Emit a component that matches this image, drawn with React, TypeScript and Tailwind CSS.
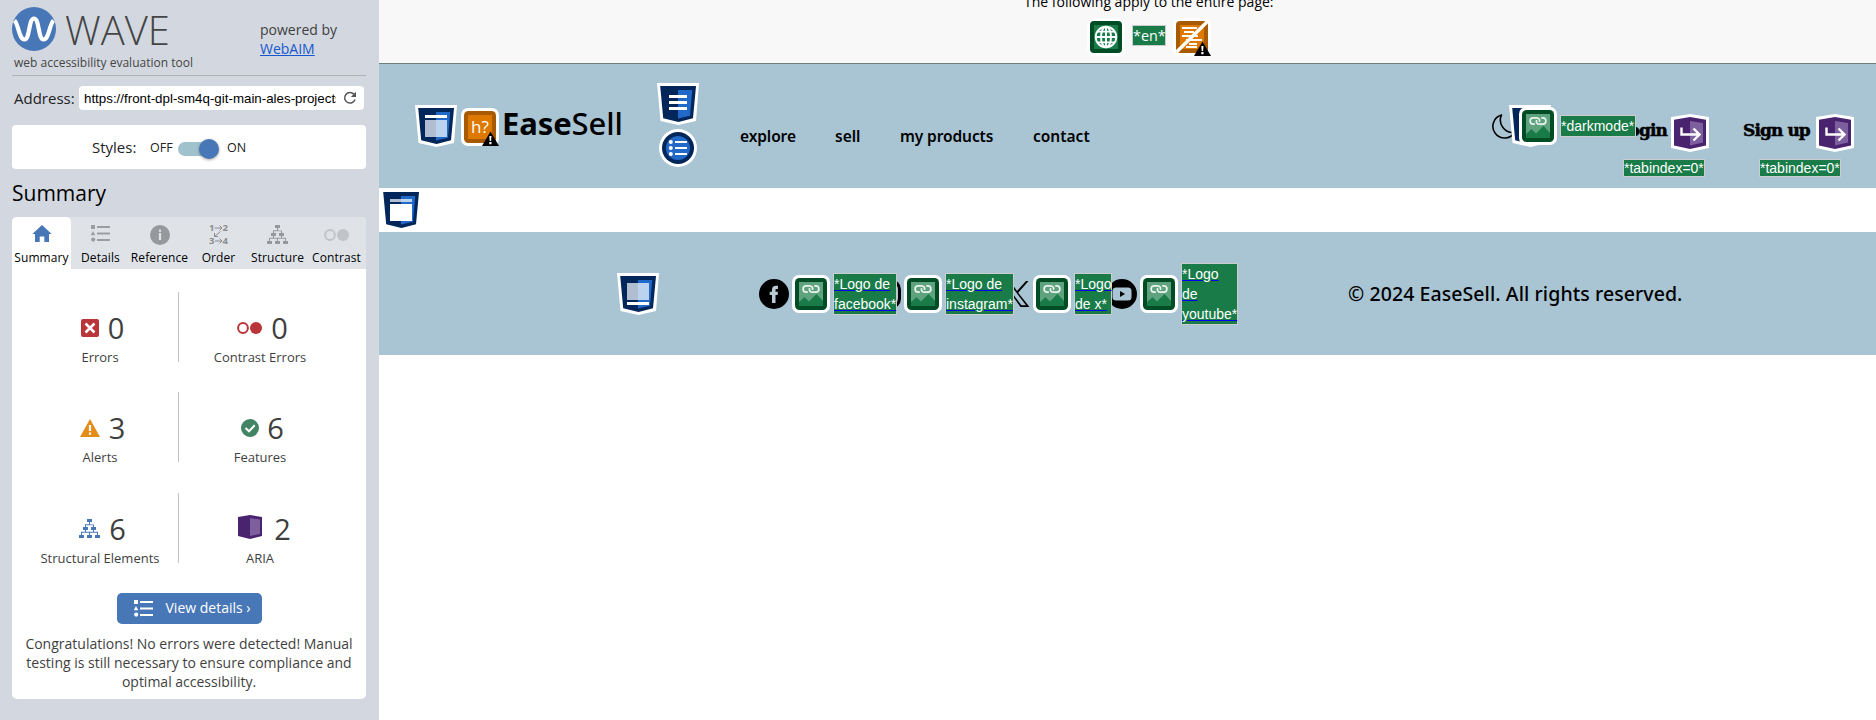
import React from "react";

const OS = "font-['Open_Sans','Noto_Sans',sans-serif]";
const NS = "font-['Noto_Sans','Open_Sans',sans-serif]";
const LS = "font-['Liberation_Sans',Arial,sans-serif]";
const SLAB =
  "font-['DejaVu_Serif',serif] text-[17px] font-bold leading-[28px] tracking-[-0.900px] [-webkit-text-stroke:0.5px_#000]";

type P = { className?: string };

function Warning({ x = 21, y = 23 }: { x?: number; y?: number }) {
  return (
    <g transform={`translate(${x} ${y})`}>
      <path d="M8.5 0.5 17 15H0Z" fill="#000" />
      <path d="M7.3 5h2.2l-.4 5H7.7ZM7.3 11h2.2v2.2H7.3Z" fill="#fff" />
    </g>
  );
}

function Shield({ kind, className = "" }: P & { kind: "header" | "main" | "footer" | "nav" }) {
  return (
    <svg className={`shrink-0 ${className}`} width="42" height="42" viewBox="0 0 42 42">
      <path d="M0 0H42L39 38 21.5 42 3.5 38Z" fill="#fff" />
      <path d="M3.2 3H39L36 35.3 21.5 39 6.2 35.3Z" fill="#00265a" />
      <path d="M21 7H35.2L33 32.7 21 35.5Z" fill="#2169c9" />
      {kind === "header" && (
        <>
          <path d="M10 10H32v3H10Z" fill="#fff" />
          <path d="M10 15H21V32H10Z" fill="#b1bdd0" />
          <path d="M21 15H32V32H21Z" fill="#bcd3f0" />
        </>
      )}
      {kind === "main" && (
        <>
          <path d="M10 10H21v3H10Z" fill="#b1bdd0" />
          <path d="M21 10H32v3H21Z" fill="#bcd3f0" />
          <path d="M10 15H32V32H10Z" fill="#fff" />
        </>
      )}
      {kind === "footer" && (
        <>
          <path d="M10 10H21V27H10Z" fill="#b1bdd0" />
          <path d="M21 10H32V27H21Z" fill="#bcd3f0" />
          <path d="M10 29H32v3H10Z" fill="#fff" />
        </>
      )}
      {kind === "nav" && <path d="M12 12H30v3H12ZM12 18H30v3H12ZM12 24H30v3H12Z" fill="#fff" />}
    </svg>
  );
}

function ListBadge({ className = "" }: P) {
  return (
    <svg className={`shrink-0 ${className}`} width="38" height="38" viewBox="0 0 38 38">
      <circle cx="19" cy="19" r="19" fill="#fff" />
      <circle cx="19" cy="19" r="16" fill="#00265a" />
      <circle cx="19" cy="19" r="12" fill="#2169c9" />
      <circle cx="11.8" cy="13" r="2" fill="#fff" />
      <circle cx="11.8" cy="19" r="2" fill="#fff" />
      <circle cx="11.8" cy="25" r="2" fill="#fff" />
      <path d="M16 12H28v2H16ZM16 18H28v2H16ZM16 24H28v2H16Z" fill="#fff" />
    </svg>
  );
}

function LinkedImage({ className = "" }: P) {
  return (
    <svg className={`shrink-0 ${className}`} width="38" height="38" viewBox="0 0 38 38">
      <rect width="38" height="38" rx="7" fill="#fff" />
      <rect x="3" y="3" width="32" height="32" rx="4.5" fill="#004d25" />
      <rect x="7" y="7" width="24" height="24" fill="#5ea27e" />
      <path d="M7 27 12.5 22.3 17 26.5 24.5 19 31 26V31H7Z" fill="#187b48" />
      <path
        d="M15.800 17.200H14.300A3.200 3.200 0 0 1 14.300 10.800H17.300C20 10.800 21.300 12.700 20.300 15M22.200 10.800H23.700A3.200 3.200 0 0 1 23.700 17.200H20.700C18 17.200 16.700 15.300 17.700 13"
        fill="none"
        stroke="#e9f3ed"
        strokeWidth="1.700"
      />
    </svg>
  );
}

function AriaTab({ className = "" }: P) {
  return (
    <svg className={`shrink-0 ${className}`} width="38" height="38" viewBox="0 0 38 38">
      <path d="M0 3 19 0 38 3V34L19 38 0 34Z" fill="#fff" />
      <path d="M3 5.7 19 3 35 5.7V31.4L19 35 3 31.4Z" fill="#4a236f" />
      <path d="M19 7 32 9V28.5L19 31.5Z" fill="#7e5f9e" />
      <path d="M10.5 13.5V20.5H28M22.5 14.5 28.5 20.5 22.5 26.5" fill="none" stroke="#fff" strokeWidth="2.4" />
    </svg>
  );
}

function OrangeH({ className = "" }: P) {
  return (
    <div className={`relative h-[38px] w-[38px] shrink-0 ${className}`}>
      <svg width="38" height="38" viewBox="0 0 38 38">
        <rect width="38" height="38" rx="7" fill="#fff" />
        <rect x="3" y="3" width="32" height="32" rx="4.5" fill="#a85a00" />
        <rect x="7" y="7" width="24" height="24" fill="#dd7900" />
      </svg>
      <span className={`absolute left-[10px] top-[9px] text-[17px] leading-[20px] text-white ${OS}`}>h?</span>
      <svg className="absolute left-0 top-0" width="38" height="38" viewBox="0 0 38 38">
        <Warning />
      </svg>
    </div>
  );
}

function Globe({ className = "" }: P) {
  return (
    <svg className={`shrink-0 ${className}`} width="38" height="38" viewBox="0 0 38 38">
      <rect width="38" height="38" rx="7" fill="#fff" />
      <rect x="3" y="3" width="32" height="32" rx="4" fill="#004d25" />
      <rect x="7" y="7" width="24" height="24" fill="#187b48" />
      <g fill="none" stroke="#fff" strokeWidth="1.9">
        <circle cx="19" cy="19" r="10.3" />
        <ellipse cx="19" cy="19" rx="5" ry="10.3" />
        <path d="M19 8.5V29.5M8.5 19H29.5M10.5 13.6H27.5M10.5 24.4H27.5" />
      </g>
    </svg>
  );
}

function NoHeadings({ className = "" }: P) {
  return (
    <svg className={`shrink-0 ${className}`} width="38" height="38" viewBox="0 0 38 38">
      <rect width="38" height="38" rx="7" fill="#fff" />
      <rect x="3" y="3" width="32" height="32" rx="4" fill="#a85a00" />
      <rect x="7" y="7" width="24" height="24" fill="#dd7900" />
      <path d="M9 9H24v2H9ZM11 13H21v2H11ZM9 17H25v2H9ZM13 21H29v2H13ZM16 25H24v2H16ZM13 28H24v2H13Z" fill="#fff" />
      <path d="M3.8 33.8 34.2 3.8" stroke="#fff" strokeWidth="3.4" />
      <Warning x={21} y={23} />
    </svg>
  );
}

function Label({ className = "", children }: P & { children: React.ReactNode }) {
  return (
    <span className={`block shrink-0 whitespace-nowrap border border-[#ccc] bg-[#187b48] text-[14px] text-white ${LS} ${className}`}>
      {children}
    </span>
  );
}

function Structure({ color, className = "" }: P & { color: string }) {
  return (
    <svg className={className} width="22" height="20" viewBox="0 0 22 20">
      <path
        fill={color}
        d="M8 0h5v3H8ZM4 8h5v3H4ZM12 8h5v3H12ZM0 16h5v3H0ZM8 16h5v3H8ZM16 16h5v3H16ZM10 3h1v2.500h4V8h-1V6.300H7V8H6V5.300h4ZM6 11h1v1.800h7V11h1v1.800h4V16h-1v-2.200h-7V16h-1v-2.200H3V16H2v-3.200h4Z"
      />
    </svg>
  );
}

function DetailsIcon({ color, className = "" }: P & { color: string }) {
  return (
    <svg className={className} width="20" height="17" viewBox="0 0 20 17" fill={color}>
      <path d="M0 0h4v4H0ZM6 1h13v2H6ZM2 6l2.300 4.300H-.3ZM6 7.500h13v2H6ZM6 14h13v2H6Z" />
      <circle cx="2.200" cy="14.600" r="2.100" />
    </svg>
  );
}

function TwoCircles({ color, size }: { color: string; size: number }) {
  return (
    <svg width={size * 2 + 1} height={size} viewBox="0 0 25 12">
      <circle cx="6" cy="6" r="4.900" fill="none" stroke={color} strokeWidth="2" />
      <circle cx="19" cy="6" r="6" fill={color} />
    </svg>
  );
}

function OrderIcon() {
  return (
    <div className={`relative h-[22px] w-[19px] text-[9.500px] font-bold leading-[10px] text-[#8a8d90] ${OS}`}>
      <span className="absolute left-0 top-[-1px]">1</span>
      <span className="absolute right-0 top-[-1px]">2</span>
      <span className="absolute left-0 top-[12px]">3</span>
      <span className="absolute right-0 top-[12px]">4</span>
      <svg className="absolute left-0 top-0" width="20" height="22" viewBox="0 0 20 22" fill="none" stroke="#8a8d90" strokeWidth="1">
        <path d="M5.500 4H13M10.500 1.500 13 4 10.500 6.500M6 17H13M10.500 14.500 13 17 10.500 19.500M11.500 7.500 5.500 12.500M5.500 9V12.500H9" />
      </svg>
    </div>
  );
}

function Tab({ label, icon, active = false }: { label: string; icon: React.ReactNode; active?: boolean }) {
  return (
    <div
      className={`flex h-[52px] w-[59px] flex-col items-center ${active ? "rounded-t-[5px] bg-white" : ""}`}
    >
      <div className="flex h-[35px] w-full items-center justify-center">{icon}</div>
      <span className={`whitespace-nowrap text-[12px] leading-[12px] tracking-[0.1px] text-black ${OS}`}>{label}</span>
    </div>
  );
}

function Stat({ icon, value, label, divider = false }: { icon: React.ReactNode; value: string; label: string; divider?: boolean }) {
  return (
    <div className={`flex h-[70px] flex-col items-center ${divider ? "w-[157px] border-r border-[#bfc1c3]" : "w-[162px]"}`}>
      <div className={`mt-[19px] flex h-[34px] items-center ${divider ? "pl-[5px]" : "pl-[5px]"}`}>
        {icon}
        <span className={`text-[29px] leading-[34px] text-[#3f3f3f] ${OS}`}>{value}</span>
      </div>
      <span className={`mt-[3px] whitespace-nowrap text-[13px] leading-[18px] text-[#3f3f3f] ${OS}`}>{label}</span>
    </div>
  );
}

function Sidebar() {
  return (
    <aside className={`h-[720px] w-[379px] shrink-0 bg-[#d3d8e0] pl-[12px] pr-[13px] ${OS}`}>
      <div className="flex h-[52px] items-start pt-[7px]">
        <svg width="44" height="44" viewBox="0 0 44 44">
          <circle cx="22" cy="22" r="22" fill="#4877b7" />
          <path
            d="M2.500 13.500C6.500 17 7 32.500 12.500 32.500 18 32.500 16.500 11.500 22 11.500 27.500 11.500 26 32.500 31.500 32.500 37 32.500 37.500 17 41.500 13.500"
            fill="none"
            stroke="#fff"
            strokeWidth="4.200"
          />
        </svg>
        <span className="ml-[9px] mt-[1px] block w-[195px] text-[40px] font-light leading-[44px] text-[#454545]">WAVE</span>
        <div className="mt-[13px] whitespace-nowrap text-[14px] leading-[19px] text-[#3f3f3f]">
          powered by
          <br />
          <span className="text-[#1657cf] underline">WebAIM</span>
        </div>
      </div>
      <div className="h-[24px] border-b border-[#aeb2b7] pl-[2px] pt-[2px] text-[12px] leading-[18px] text-[#454545]">
        web accessibility evaluation tool
      </div>
      <div className="mt-[10px] flex h-[24px] items-center pl-[2px]">
        <span className="-mt-[1px] w-[65px] text-[15px] leading-[24px] text-[#222]">Address:</span>
        <div className="flex h-[24px] w-[285px] items-center rounded-[4px] bg-white pl-[5px]">
          <span className={`block w-[252px] overflow-hidden whitespace-nowrap pt-[1px] text-[13.330px] text-black ${LS}`}>
            https://front-dpl-sm4q-git-main-ales-projects
          </span>
          <svg className="ml-[7px]" width="14" height="14" viewBox="0 0 14 14">
            <path d="M11 3.300A5.300 5.300 0 1 0 12 8.500" fill="none" stroke="#555" strokeWidth="1.500" />
            <path d="M13 .8V6H7.800Z" fill="#555" />
          </svg>
        </div>
      </div>
      <div className="mt-[15px] flex h-[44px] items-center rounded-[4px] bg-white pl-[80px] text-[#222]">
        <span className="w-[58px] text-[15px]">Styles:</span>
        <span className="mt-[2px] w-[28px] text-[12.500px]">OFF</span>
        <div className="mt-[4px] flex h-[14px] w-[38px] items-center rounded-full bg-[#9fc2cd]">
          <div className="ml-[21px] h-[20px] w-[20px] shrink-0 rounded-full bg-[#4877b7] shadow-[0_1px_3px_rgba(0,0,0,0.35)]" />
        </div>
        <span className="ml-[11px] mt-[2px] text-[12.500px]">ON</span>
      </div>
      <h2 className="mt-[10px] h-[38px] text-[21px] leading-[28px] text-black">Summary</h2>
      <div className="h-[482px] rounded-[5px] bg-white">
        <div className="flex h-[52px] rounded-t-[5px] bg-[#dfe3e8]">
          <Tab
            active
            label="Summary"
            icon={
              <svg className="-mt-[2px]" width="20" height="17" viewBox="0 0 20 17">
                <path d="M10 0 19.700 9H17V17H12.300V11.500H7.700V17H3V9H.3Z" fill="#4877b7" />
              </svg>
            }
          />
          <Tab label="Details" icon={<DetailsIcon color="#9b9ea1" className="-mt-[2px]" />} />
          <Tab
            label="Reference"
            icon={
              <svg width="20" height="20" viewBox="0 0 20 20">
                <circle cx="10" cy="10" r="10" fill="#96999c" />
                <path d="M8.900 4.500h2.200v2.200H8.900ZM8.900 8h2.200v7H8.900Z" fill="#dfe3e8" />
              </svg>
            }
          />
          <Tab label="Order" icon={<OrderIcon />} />
          <Tab label="Structure" icon={<Structure color="#96999c" />} />
          <Tab label="Contrast" icon={<TwoCircles color="#c0c3c7" size={12} />} />
        </div>
        <div className="flex flex-wrap gap-y-[30.400px] pl-[10px] pt-[23px]">
          <Stat
            divider
            value="0"
            label="Errors"
            icon={
              <svg className="mr-[9px]" width="18" height="18" viewBox="0 0 18 18">
                <rect width="18" height="18" rx="2" fill="#b93539" />
                <path d="M4.500 4.500 13.500 13.500M13.500 4.500 4.500 13.500" stroke="#fff" strokeWidth="2.500" />
              </svg>
            }
          />
          <Stat value="0" label="Contrast Errors" icon={<div className="mr-[9px]"><TwoCircles color="#b93539" size={12} /></div>} />
          <Stat
            divider
            value="3"
            label="Alerts"
            icon={
              <svg className="mr-[9px]" width="20" height="18" viewBox="0 0 20 18">
                <path d="M10 0 20 18H0Z" fill="#e38c17" />
                <path d="M8.900 6h2.200v6H8.900ZM8.900 13.500h2.200v2.200H8.900Z" fill="#fff" />
              </svg>
            }
          />
          <Stat
            value="6"
            label="Features"
            icon={
              <svg className="mr-[8px]" width="18" height="18" viewBox="0 0 18 18">
                <circle cx="9" cy="9" r="9" fill="#428464" />
                <path d="M4.500 9 8 12.300 13.700 6.200" fill="none" stroke="#fff" strokeWidth="2" />
              </svg>
            }
          />
          <Stat divider value="6" label="Structural Elements" icon={<Structure color="#4877b7" className="mr-[8px]" />} />
          <Stat
            value="2"
            label="ARIA"
            icon={
              <svg className="ml-[4px] mr-[12px] -mt-[3px]" width="24" height="24" viewBox="0 0 24 24">
                <path d="M0 2 12 0 24 2V21L12 24 0 21Z" fill="#4a236f" />
                <path d="M12 3 22 4.500V19L12 21Z" fill="#7e5f9e" />
              </svg>
            }
          />
        </div>
        <div className="mx-auto mt-[30px] flex h-[31px] w-[145px] items-center rounded-[5px] bg-[#4877b7] pl-[17px] text-[14px] text-white">
          <DetailsIcon color="#fff" className="mr-[12px]" />
          <span className="-mt-[1px] whitespace-nowrap">View details ›</span>
        </div>
        <p className="mt-[10px] whitespace-nowrap text-center text-[14px] leading-[19px] text-[#3f3f3f]">
          Congratulations! No errors were detected! Manual
          <br />
          testing is still necessary to ensure compliance and
          <br />
          optimal accessibility.
        </p>
      </div>
    </aside>
  );
}

function Header() {
  return (
    <header className="flex h-[124px] items-start bg-[#a9c4d3] text-black">
      <Shield kind="header" className="ml-[36px] mt-[41px]" />
      <OrangeH className="ml-[4px] mt-[44px]" />
      <div className={`ml-[3px] mt-[39px] w-[155px] whitespace-nowrap text-[31px] font-medium leading-[40px] tracking-[-0.100px] ${NS}`}>
        <b>Ease</b>Sell
      </div>
      <div className="mt-[19px] flex w-[42px] flex-col items-center gap-[4px]">
        <Shield kind="nav" />
        <ListBadge />
      </div>
      <nav className={`ml-[41px] mt-[60px] flex w-[752px] text-[15.500px] font-semibold leading-[24px] ${NS}`}>
        <span className="w-[95px] tracking-[-0.100px]">explore</span>
        <span className="w-[65px]">sell</span>
        <span className="w-[133px] tracking-[-0.100px]">my products</span>
        <span>contact</span>
      </nav>
      <div className="relative mt-[41px] h-[42px] w-[128px]">
        <svg className="absolute left-0 top-[9px]" width="24" height="25" viewBox="0 0 24 25">
          <path d="M9.500 1A11.700 11.700 0 1 0 22.500 18.500 12.500 12.500 0 0 1 9.500 1Z" fill="none" stroke="#000" strokeWidth="1.600" strokeLinejoin="round" />
        </svg>
        <Shield kind="header" className="absolute left-[17px] top-0" />
        <LinkedImage className="absolute left-[27px] top-[2px]" />
        <Label className="absolute left-[68px] top-[10px] z-10 h-[22px] w-[76px] leading-[20px]">*darkmode*</Label>
      </div>
      <div className="mt-[50px] w-[89px]">
        <div className="flex">
          <span className={`flex w-[51px] shrink-0 justify-end pr-[4px] pt-[2px] ${SLAB}`}>
            Login
          </span>
          <AriaTab />
        </div>
        <Label className="ml-[3px] mt-[7px] h-[18px] w-[82px] leading-[16px]">*tabindex=0*</Label>
      </div>
      <div className="ml-[34px] mt-[50px] w-[112px]">
        <div className="flex">
          <span className={`w-[73px] shrink-0 whitespace-nowrap pt-[2px] ${SLAB}`}>
            Sign up
          </span>
          <AriaTab />
        </div>
        <Label className="ml-[16px] mt-[7px] h-[18px] w-[82px] leading-[16px]">*tabindex=0*</Label>
      </div>
    </header>
  );
}

function Footer() {
  return (
    <footer className="flex h-[123px] items-center bg-[#a9c4d3] text-black">
      <Shield kind="footer" className="ml-[238px]" />
      <div className="ml-[100px] flex w-[589px] items-center">
        <svg className="shrink-0" width="30" height="30" viewBox="0 0 30 30">
          <circle cx="15" cy="15" r="15" />
          <path d="M13 24V16H10.700V12.700H13V10.600C13 8 14.500 6.700 17 6.700H19V9.900H17.700C16.700 9.900 16.500 10.400 16.500 11.200V12.700H19L18.600 16H16.500V24Z" fill="#b8cbd5" />
        </svg>
        <LinkedImage className="ml-[3px]" />
        <Label className="relative z-10 ml-[3px] h-[42px] w-[64px] leading-[20px] underline decoration-[#0000ee]">
          *Logo de
          <br />
          facebook*
        </Label>
        <svg className="-ml-[26px] shrink-0" width="30" height="30" viewBox="0 0 30 30">
          <rect x="1.500" y="1.500" width="27" height="27" rx="9" fill="none" stroke="#000" strokeWidth="3" />
          <circle cx="15" cy="15" r="6" fill="none" stroke="#000" strokeWidth="3" />
        </svg>
        <LinkedImage className="ml-[3px]" />
        <Label className="relative z-10 ml-[3px] h-[42px] w-[69px] leading-[20px] underline decoration-[#0000ee]">
          *Logo de
          <br />
          instagram*
        </Label>
        <svg className="-ml-[14px] shrink-0" width="30" height="30" viewBox="0 0 30 30">
          <path
            fillRule="evenodd"
            d="M1 2H10L17 12 26 2H28.500L18.200 13.700 29.500 28H20.500L13 17.500 3.500 28H1L11.800 15.700ZM4.500 3.800 21.400 26.200H26L8.800 3.800Z"
          />
        </svg>
        <LinkedImage className="ml-[3px]" />
        <Label className="relative z-10 ml-[3px] h-[42px] w-[38px] leading-[20px] underline decoration-[#0000ee]">
          *Logo
          <br />
          de x*
        </Label>
        <svg className="-ml-[5px] shrink-0" width="30" height="30" viewBox="0 0 30 30">
          <circle cx="15" cy="15" r="15" />
          <rect x="5.500" y="8.500" width="19" height="13" rx="3.500" fill="#a9c4d3" />
          <path d="M13 12 18 15 13 18Z" />
        </svg>
        <LinkedImage className="ml-[3px]" />
        <Label className="ml-[3px] h-[62px] w-[57px] leading-[20px] underline decoration-[#0000ee]">
          *Logo
          <br />
          de
          <br />
          youtube*
        </Label>
      </div>
      <p className={`whitespace-nowrap text-[19.500px] font-medium leading-[28px] tracking-[0.080px] ${NS}`}>© 2024 EaseSell. All rights reserved.</p>
    </footer>
  );
}

export default function App() {
  return (
    <div className="flex h-[720px] w-[1876px] overflow-hidden bg-white">
      <Sidebar />
      <main className="w-[1497px]">
        <div className={`h-[64px] overflow-hidden border-b border-[#70807a] bg-[#f8f8f8] ${OS}`}>
          <div className="-mt-[8px] h-[26px] pl-[45px] text-[14px] leading-[19px] text-black">
            <p className="w-[1452px] pl-[600px]">The following apply to the entire page:</p>
          </div>
          <div className="flex pl-[708px]">
            <Globe />
            <span className="ml-[7px] mt-[7px] block h-[21px] w-[34px] border border-[#ccc] bg-[#187b48] text-center text-[14.400px] leading-[19px] text-white">
              *en*
            </span>
            <NoHeadings className="ml-[7px]" />
          </div>
        </div>
        <Header />
        <div className="h-[44px] bg-white pl-[1px] pt-[1px]">
          <Shield kind="main" />
        </div>
        <Footer />
      </main>
    </div>
  );
}
